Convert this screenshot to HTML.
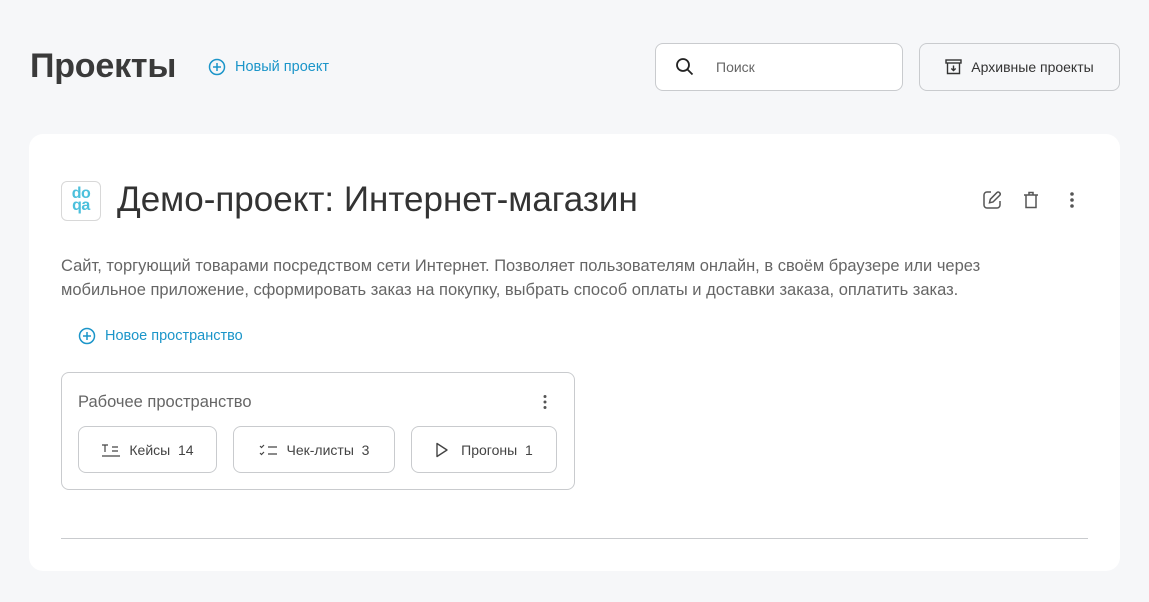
<!DOCTYPE html>
<html><head><meta charset="utf-8"><style>
*{box-sizing:border-box;margin:0;padding:0}
body{width:1149px;height:602px;background:#f6f7f9;font-family:"Liberation Sans",sans-serif;position:relative;overflow:hidden;color:#333}
.abs{position:absolute}
h1{position:absolute;left:30px;top:47px;font-size:34px;font-weight:bold;color:#3a3a3a;letter-spacing:-0.2px}
.link{color:#1b95c9;font-size:14.5px;display:flex;align-items:center;gap:9px}
.btn{background:#fff;border:1px solid #c9cbce;border-radius:8px;display:flex;align-items:center}
.card{left:29px;top:134px;width:1091px;height:437px;background:#fff;border-radius:14px}
.chip{position:absolute;top:53px;height:47px;border:1px solid #c9cbce;border-radius:8px;display:flex;align-items:center;justify-content:center;gap:8px;font-size:14px;color:#444}
</style></head><body>
<h1>Проекты</h1>
<div class="abs link" style="left:208px;top:58px"><svg width="18" height="18" viewBox="0 0 18 18" fill="none" stroke="#1b95c9" stroke-width="1.5"><circle cx="9" cy="9" r="7.5"/><path d="M9 5v8M5 9h8"/></svg>Новый проект</div>
<div class="abs btn" style="left:655px;top:43px;width:248px;height:48px"><svg style="margin-left:19px" width="20" height="20" viewBox="0 0 20 20" fill="none" stroke="#222" stroke-width="1.8"><circle cx="8" cy="8" r="6"/><path d="M12.5 12.5l5 5"/></svg><span style="margin-left:21px;color:#666;font-size:14px">Поиск</span></div>
<div class="abs btn" style="left:919px;top:43px;width:201px;height:48px;background:#f6f7f9;justify-content:center;gap:9px;font-size:14px;color:#333"><svg width="17" height="16" viewBox="0 0 17 16" fill="none" stroke="#333" stroke-width="1.4"><rect x="1" y="1" width="15" height="3"/><path d="M2.5 4v10.5h12V4M8.5 6.5v5M6.3 9.5l2.2 2 2.2-2"/></svg>Архивные проекты</div>
<div class="abs card">
 <div class="abs" style="left:32px;top:47px;width:40px;height:40px;border:1px solid #d8d8d8;border-radius:6px;color:#4cc0dc;font-weight:bold;font-size:16px;line-height:12px;text-align:center;padding-top:6px;letter-spacing:-0.5px">do<br>qa</div>
 <div class="abs" style="left:88px;top:46px;font-size:35px;color:#333">Демо-проект: Интернет-магазин</div>
 <svg class="abs" style="left:953px;top:56px" width="20" height="20" viewBox="0 0 20 20" fill="none" stroke="#555" stroke-width="1.5"><path d="M9 2H5a3 3 0 0 0-3 3v10a3 3 0 0 0 3 3h10a3 3 0 0 0 3-3v-4"/><path d="M15 2.5a2 2 0 0 1 2.8 2.8L11 12l-3.5.8.8-3.5z"/></svg>
 <svg class="abs" style="left:993px;top:56px" width="18" height="20" viewBox="0 0 18 20" fill="none" stroke="#555" stroke-width="1.5"><path d="M2 5h14M7 5V2.5h4V5M4 5v12.5h10V5"/></svg>
 <svg class="abs" style="left:1040px;top:57px" width="6" height="18" viewBox="0 0 6 18" fill="#555"><circle cx="3" cy="3" r="1.8"/><circle cx="3" cy="9" r="1.8"/><circle cx="3" cy="15" r="1.8"/></svg>
 <div class="abs" style="left:32px;top:120px;width:945px;font-size:16.5px;line-height:24px;color:#666">Сайт, торгующий товарами посредством сети Интернет. Позволяет пользователям онлайн, в своём браузере или через мобильное приложение, сформировать заказ на покупку, выбрать способ оплаты и доставки заказа, оплатить заказ.</div>
 <div class="abs link" style="left:49px;top:193px"><svg width="18" height="18" viewBox="0 0 18 18" fill="none" stroke="#1b95c9" stroke-width="1.5"><circle cx="9" cy="9" r="7.5"/><path d="M9 5v8M5 9h8"/></svg>Новое пространство</div>
 <div class="abs" style="left:32px;top:238px;width:514px;height:118px;border:1px solid #c9cbce;border-radius:8px">
  <div class="abs" style="left:16px;top:20px;font-size:16.5px;color:#666">Рабочее пространство</div>
  <svg class="abs" style="left:480px;top:21px" width="6" height="16" viewBox="0 0 6 16" fill="#555"><circle cx="3" cy="2.5" r="1.5"/><circle cx="3" cy="8" r="1.5"/><circle cx="3" cy="13.5" r="1.5"/></svg>
  <div class="chip" style="left:16px;width:139px"><svg width="20" height="14" viewBox="0 0 20 14" fill="none" stroke="#444" stroke-width="1.2"><path d="M1 2h6M4 2v7M11 4h6M11 8h6M1 13h18"/></svg>Кейсы&nbsp; 14</div>
  <div class="chip" style="left:171px;width:162px"><svg width="20" height="14" viewBox="0 0 20 14" fill="none" stroke="#444" stroke-width="1.2"><path d="M1 3l1.5 1.5L5 2M1 10l1.5 1.5L5 9M9 4h9M9 11h9"/></svg>Чек-листы&nbsp; 3</div>
  <div class="chip" style="left:349px;width:146px"><svg width="14" height="16" viewBox="0 0 14 16" fill="none" stroke="#444" stroke-width="1.4"><path d="M2 1.5v13l10-6.5z" stroke-linejoin="round"/></svg>&nbsp;Прогоны&nbsp; 1</div>
 </div>
 <div class="abs" style="left:32px;top:404px;width:1027px;height:1px;background:#c9cbce"></div>
</div>
</body></html>
